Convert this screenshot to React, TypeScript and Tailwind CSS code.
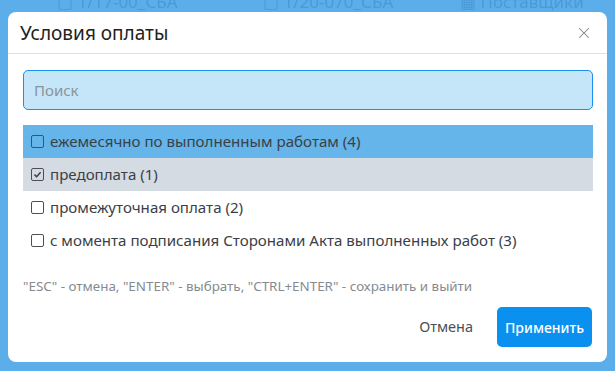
import { X } from "lucide-react";

const items = [
  { label: "ежемесячно по выполненным работам (4)", checked: false, tone: "active" },
  { label: "предоплата (1)", checked: true, tone: "selected" },
  { label: "промежуточная оплата (2)", checked: false, tone: "" },
  { label: "с момента подписания Сторонами Акта выполненных работ (3)", checked: false, tone: "" },
];

function Box({ checked }: { checked: boolean }) {
  return (
    <span className="w-[13px] h-[13px] rounded-[2px] border-[1.5px] border-[#4b5057] flex items-center justify-center shrink-0">
      {checked && (
        <svg width="9" height="9" viewBox="0 0 9 9" fill="none">
          <path d="M1.5 4.6 L3.6 6.7 L7.6 2.2" stroke="#3a3f45" strokeWidth="1.5" />
        </svg>
      )}
    </span>
  );
}

export default function App() {
  return (
    <div
      className="w-[615px] h-[371px] overflow-hidden bg-[#5caeea] px-[8px]"
      style={{ fontFamily: '"Noto Sans", "Open Sans", sans-serif' }}
    >
      {/* page behind the overlay */}
      <div className="h-[12px] overflow-hidden">
        <div className="flex text-[17px] text-[#4a9ad6] leading-[16px] -mt-[6px] pl-[49px] blur-[0.6px] whitespace-nowrap">
          <span className="w-[206px]">▢ 1/17-00_СБА</span>
          <span className="w-[197px]">▢ 1/20-070_СБА</span>
          <span>▦ Поставщики</span>
        </div>
      </div>

      <div className="w-[599px] h-[350px] bg-white rounded-[8px] flex flex-col">
        {/* Header */}
        <div className="h-[42px] border-b border-[#d9e2ea] flex items-center justify-between pl-[12px] pr-[14px]">
          <h1 className="text-[19px] text-[#222] pt-[2px]">Условия оплаты</h1>
          <X className="w-[18px] h-[18px] text-[#7d848c]" strokeWidth={1.4} />
        </div>

        {/* Body */}
        <div className="px-[15px] pt-[16px]">
          <div className="h-[40px] w-[570px] rounded-[5px] border border-[#1a8ff0] bg-[#c5e5f9] flex items-center px-[10px] text-[15px] text-[#8a949c]">
            Поиск
          </div>

          <div className="mt-[15px] w-[570px]">
            {items.map((it) => (
              <div
                key={it.label}
                className={
                  "h-[33px] flex items-center gap-[6px] pl-[8px] text-[15.1px] text-[#3b4046] " +
                  (it.tone === "active"
                    ? "bg-[#65b4ea]"
                    : it.tone === "selected"
                    ? "bg-[#d4dbe2]"
                    : "")
                }
              >
                <Box checked={it.checked} />
                <span>{it.label}</span>
              </div>
            ))}
          </div>

          <p className="mt-[20px] text-[13.4px] text-[#858b91] leading-[18px]">
            "ESC" - отмена, "ENTER" - выбрать, "CTRL+ENTER" - сохранить и выйти
          </p>

          <div className="mt-[12px] flex justify-end items-center gap-[24px]">
            <button className="text-[14.5px] text-[#4a4f55]">Отмена</button>
            <button className="h-[40px] w-[95px] rounded-[5px] bg-[#0a91f0] text-white text-[14px] font-medium">
              Применить
            </button>
          </div>
        </div>
      </div>
    </div>
  );
}
